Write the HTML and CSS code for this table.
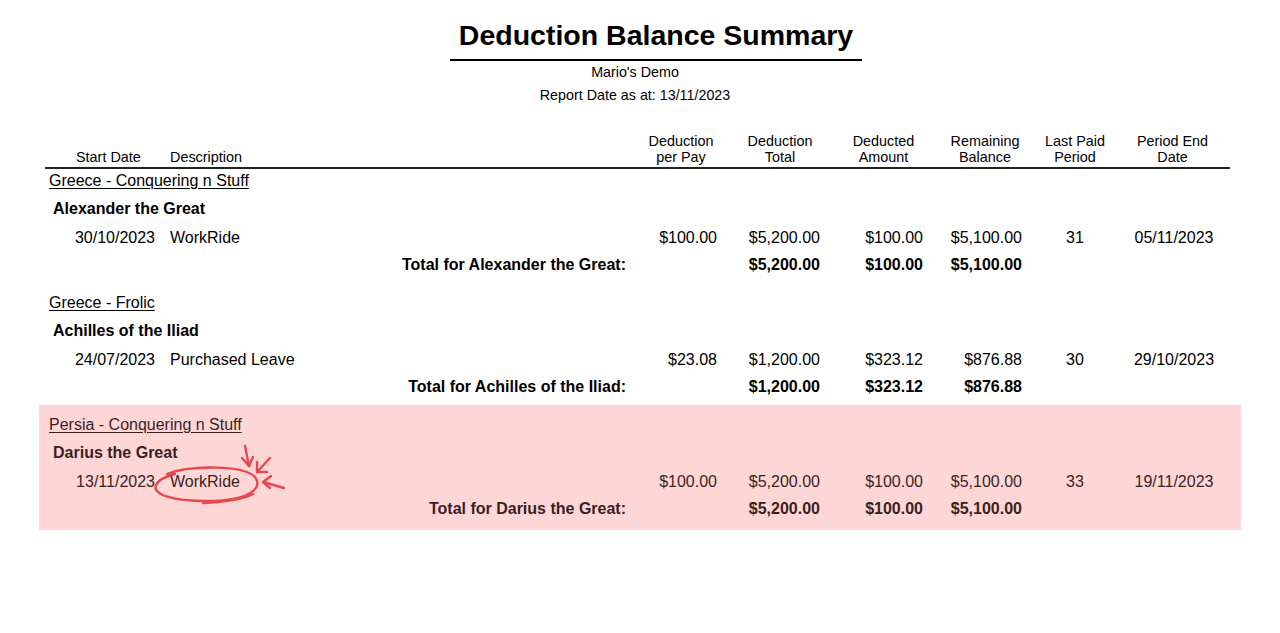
FILE: index.html
```html
<!DOCTYPE html>
<html>
<head>
<meta charset="utf-8">
<link rel="stylesheet" href="styles.css">
</head>
<body>
<div class="report">
  <div class="report-head">
    <h1 class="title">Deduction Balance Summary</h1>
    <div class="sub">Mario's Demo</div>
    <div class="sub">Report Date as at: 13/11/2023</div>
  </div>

  <div class="row head-row">
    <div class="h c-start">Start Date</div>
    <div class="h c-desc">Description</div>
    <div class="h c-num h3">Deduction<br>per Pay</div>
    <div class="h c-num">Deduction<br>Total</div>
    <div class="h c-num">Deducted<br>Amount</div>
    <div class="h c-num">Remaining<br>Balance</div>
    <div class="h c-num">Last Paid<br>Period</div>
    <div class="h c-num">Period End<br>Date</div>
  </div>

  <div class="sections">
    <section class="group">
      <div class="group-name">Greece - Conquering n Stuff</div>
      <div class="emp">Alexander the Great</div>
      <div class="row data">
        <div class="d-start">30/10/2023</div>
        <div class="d-desc">WorkRide</div>
        <div class="d-num p3">$100.00</div>
        <div class="d-num p4">$5,200.00</div>
        <div class="d-num p5">$100.00</div>
        <div class="d-num p6">$5,100.00</div>
        <div class="d-center">31</div>
        <div class="d-center d-end">05/11/2023</div>
      </div>
      <div class="row total">
        <div class="t-label">Total for Alexander the Great:</div>
        <div class="t-gap"></div>
        <div class="d-num p4">$5,200.00</div>
        <div class="d-num p5">$100.00</div>
        <div class="d-num p6">$5,100.00</div>
      </div>
    </section>

    <section class="group">
      <div class="group-name">Greece - Frolic</div>
      <div class="emp">Achilles of the Iliad</div>
      <div class="row data">
        <div class="d-start">24/07/2023</div>
        <div class="d-desc">Purchased Leave</div>
        <div class="d-num p3">$23.08</div>
        <div class="d-num p4">$1,200.00</div>
        <div class="d-num p5">$323.12</div>
        <div class="d-num p6">$876.88</div>
        <div class="d-center">30</div>
        <div class="d-center d-end">29/10/2023</div>
      </div>
      <div class="row total">
        <div class="t-label">Total for Achilles of the Iliad:</div>
        <div class="t-gap"></div>
        <div class="d-num p4">$1,200.00</div>
        <div class="d-num p5">$323.12</div>
        <div class="d-num p6">$876.88</div>
      </div>
    </section>

    <section class="group highlight">
      <div class="group-name">Persia - Conquering n Stuff</div>
      <div class="emp">Darius the Great</div>
      <div class="row data">
        <div class="d-start">13/11/2023</div>
        <div class="d-desc">WorkRide</div>
        <div class="d-num p3">$100.00</div>
        <div class="d-num p4">$5,200.00</div>
        <div class="d-num p5">$100.00</div>
        <div class="d-num p6">$5,100.00</div>
        <div class="d-center">33</div>
        <div class="d-center d-end">19/11/2023</div>
      </div>
      <div class="row total">
        <div class="t-label">Total for Darius the Great:</div>
        <div class="t-gap"></div>
        <div class="d-num p4">$5,200.00</div>
        <div class="d-num p5">$100.00</div>
        <div class="d-num p6">$5,100.00</div>
      </div>
      <svg class="annot" width="150" height="70" viewBox="0 0 150 70" fill="none" stroke="#e9464f" stroke-width="2.4" stroke-linecap="round" stroke-linejoin="round">
        <path d="M22,34 C45,25 99,25 110,37 C119,49 102,61 62,61 C26,61 7,54 11,45 C14,39 22,36 30,34"/>
        <path d="M58,63 C80,62 99,59 108,54"/>
        <path d="M100,6 L104,26"/>
        <path d="M97,18 L104,26 L108,17"/>
        <path d="M125,18 L112,32"/>
        <path d="M112,22 L112,32 L122,32"/>
        <path d="M139,48 L118,42"/>
        <path d="M126,36 L118,42 L125,48"/>
      </svg>
    </section>
  </div>
</div>
</body>
</html>
```

FILE: styles.css
```css
* { box-sizing: border-box; }
html, body { margin: 0; padding: 0; background: #fff; }
body {
  font-family: "Liberation Sans", Arial, sans-serif;
  color: #000;
  width: 1280px;
}
.report {
  margin-left: 45px;
  width: 1185px;
  padding-top: 19px;
}
.report-head {
  display: flex;
  flex-direction: column;
  align-items: center;
}
.title {
  margin: 0 0 0 37px;
  font-size: 28.5px;
  line-height: 32px;
  font-weight: bold;
  width: 412px;
  text-align: center;
  padding-bottom: 8px;
  border-bottom: 2px solid #000;
}
.sub {
  font-size: 14.3px;
  line-height: 23px;
  margin-left: -5px;
}
.row {
  display: grid;
  grid-template-columns: 115px 480px 88px 104px 103px 100px 80px 115px;
}
.head-row {
  margin-top: 26px;
  font-size: 14.4px;
  line-height: 16px;
  padding-bottom: 2px;
  border-bottom: 2px solid #222;
}
.h { align-self: end; }
.c-start { padding-left: 31px; }
.c-desc { padding-left: 10px; }
.c-num { text-align: center; }
.h3 { padding-right: 6px; }

.sections {
  display: flex;
  flex-direction: column;
  gap: 12px;
}
.group { position: relative; }
.group-name {
  font-size: 16px;
  line-height: 24px;
  height: 24px;
  padding-left: 4px;
  text-decoration: underline;
  text-underline-offset: 2px;
}
.emp {
  font-size: 16px;
  font-weight: bold;
  line-height: 32px;
  height: 32px;
  padding-left: 8px;
}
.data {
  font-size: 16px;
  line-height: 26px;
  height: 26px;
}
.total {
  font-size: 16px;
  font-weight: bold;
  line-height: 28px;
  height: 28px;
}
.d-start { text-align: right; padding-right: 5px; }
.d-desc { padding-left: 10px; }
.d-num { text-align: right; }
.p3 { padding-right: 11px; }
.p4 { padding-right: 12px; }
.p5 { padding-right: 12px; }
.p6 { padding-right: 13px; }
.d-center { text-align: center; }
.d-end { padding-left: 3px; }
.t-label {
  grid-column: 1 / 3;
  text-align: right;
  padding-right: 14px;
}

.highlight {
  margin: -8px -11px 0 -6px;
  padding: 8px 11px 7px 6px;
  background: #ffd6d6;
  color: #3a1f1f;
}
.annot {
  position: absolute;
  left: 106px;
  top: 35px;
}
```
